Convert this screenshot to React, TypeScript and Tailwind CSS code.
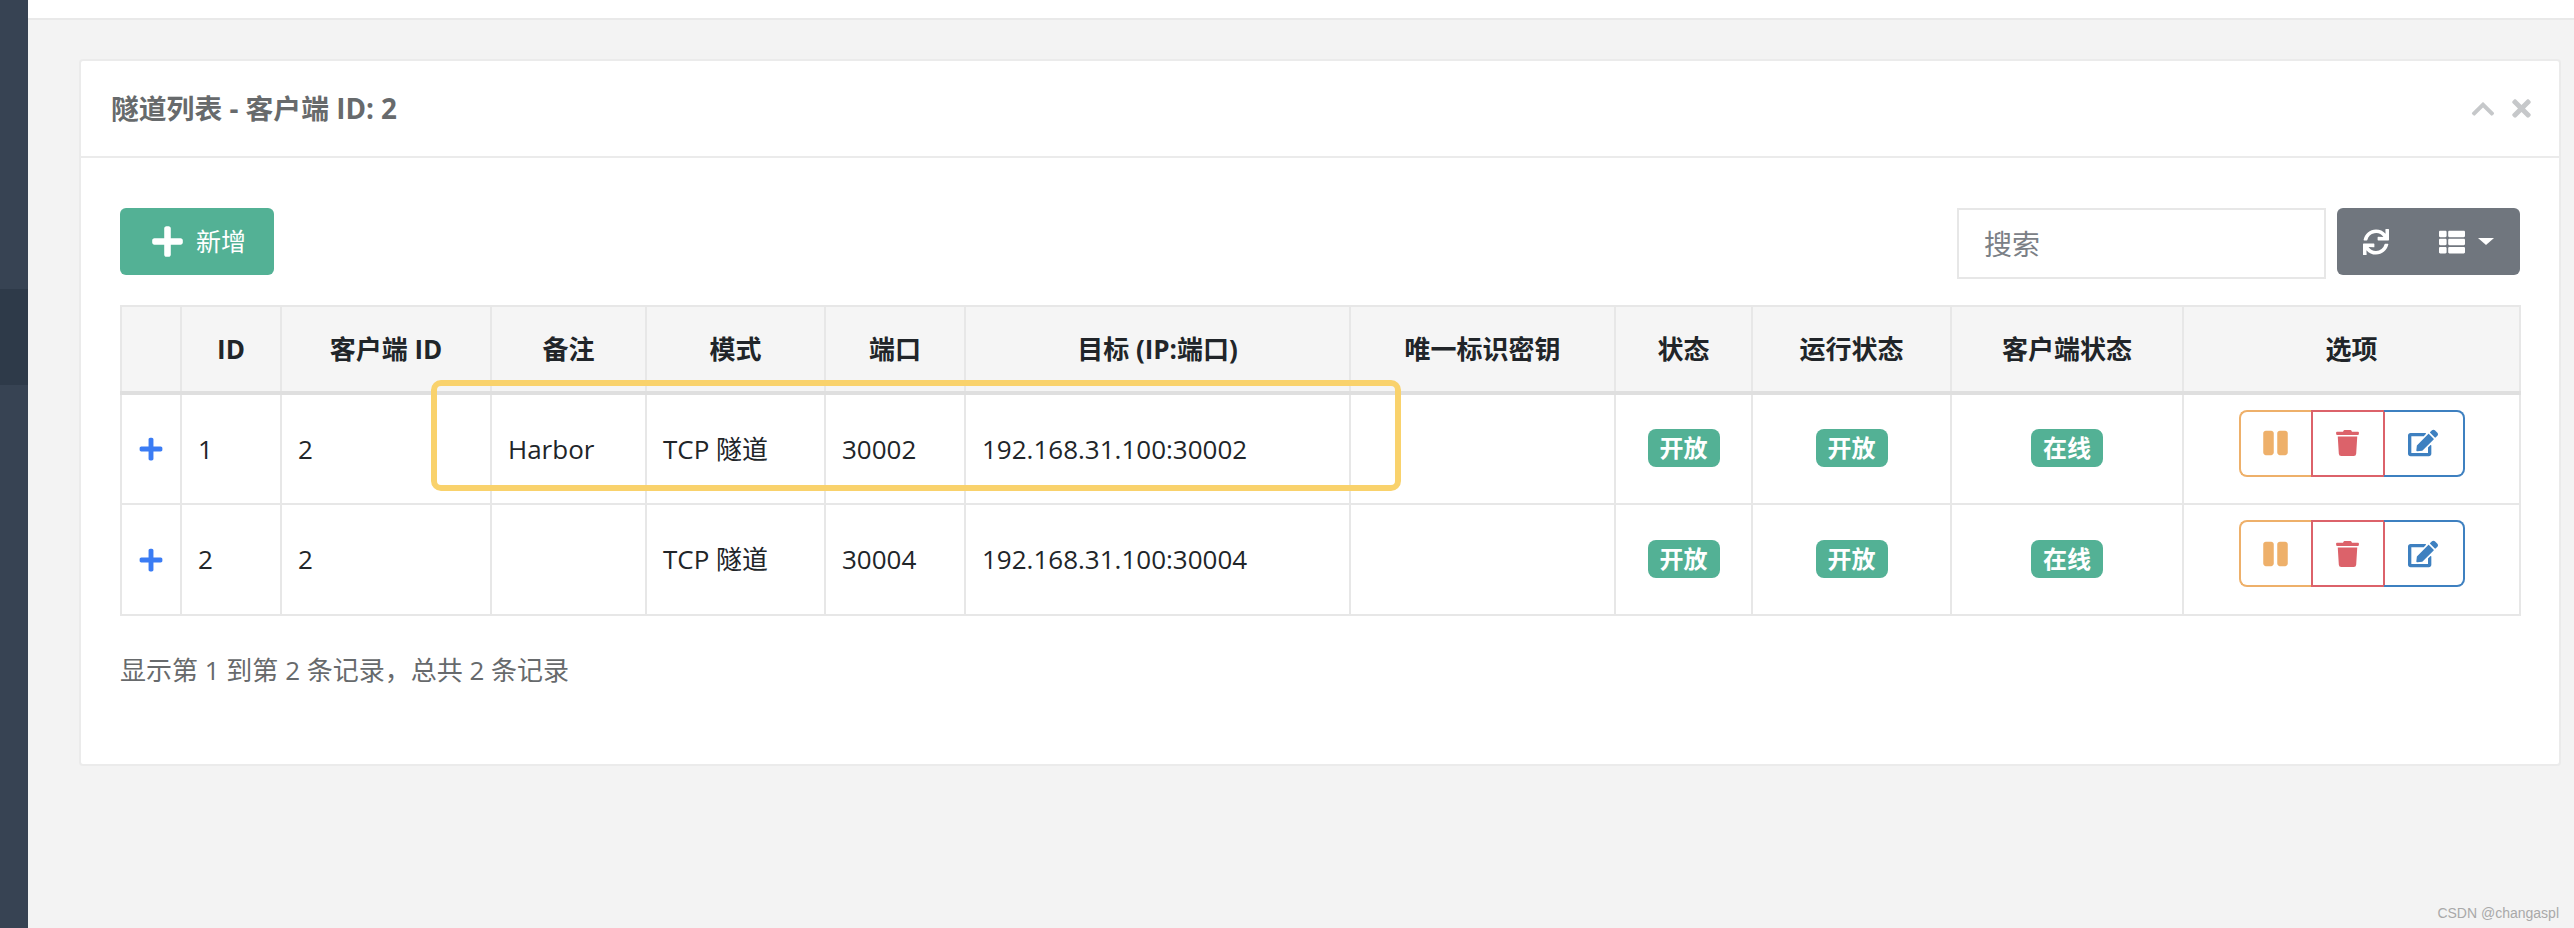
import { FaChevronUp, FaEdit, FaPause, FaPlus, FaSync, FaThList, FaTimes, FaTrash } from "react-icons/fa";

interface Tunnel {
  id: number;
  clientId: number;
  remark: string;
  port: number;
  target: string;
}

const tunnels: Tunnel[] = [
  { id: 1, clientId: 2, remark: "Harbor", port: 30002, target: "192.168.31.100:30002" },
  { id: 2, clientId: 2, remark: "", port: 30004, target: "192.168.31.100:30004" },
];

const columns = ["", "ID", "客户端 ID", "备注", "模式", "端口", "目标 (IP:端口)", "唯一标识密钥", "状态", "运行状态", "客户端状态", "选项"];

function Badge({ text }: { text: string }) {
  return (
    <span className="mb-[3px] inline-flex h-[38px] w-[72px] items-center justify-center rounded-lg bg-[#53b195] align-middle text-[24px] leading-none font-bold text-white">
      {text}
    </span>
  );
}

export default function App() {
  const cell = "border-2 border-[#e7e7e7] px-[16px] text-[26px] font-normal text-[#212529]";

  return (
    <div className="flex h-[928px] w-[2574px] overflow-hidden bg-[#f3f3f3] font-['Open_Sans','Noto_Sans_CJK_SC',sans-serif] text-[#676a6c]">
      {/* Sidebar */}
      <div className="w-[28px] shrink-0 bg-[#374353] pt-[289px]">
        <div className="h-[96px] bg-[#2e3a49]" />
      </div>

      <div className="relative min-w-0 flex-1">
        {/* Top bar */}
        <div className="h-[20px] border-b-2 border-[#e9e9e9] bg-white" />

        <div className="pt-[39px] pr-[13px] pl-[51px]">
          <div className="h-[707px] rounded border-2 border-[#ebebeb] bg-white">
            {/* Card header */}
            <div className="flex h-[97px] items-center justify-between border-b-2 border-[#ebebeb] pr-[28px] pl-[30px]">
              <h2 className="text-[27.8px] leading-none font-bold text-[#676a6c]">隧道列表 - 客户端 ID: 2</h2>
              <div className="flex items-center gap-[16px] text-[#c6c8ca]">
                <FaChevronUp className="h-[26px] w-[26px]" />
                <FaTimes className="h-[27px] w-[19px]" />
              </div>
            </div>

            {/* Card body */}
            <div className="px-[39px] pt-[50px]">
              <div className="flex items-start justify-between">
                <button className="flex h-[67px] w-[154px] items-center gap-[11px] rounded-md bg-[#53b195] pl-[30px] text-[25px] text-white">
                  <FaPlus className="h-[35px] w-[35px]" />
                  新增
                </button>
                <div className="flex items-start gap-[11px]">
                  <input
                    placeholder="搜索"
                    className="h-[71px] w-[369px] border-2 border-[#e7e7e7] bg-white px-[25px] text-[28px] outline-none placeholder:text-[#7b8086]"
                  />
                  <div className="flex h-[67px] w-[183px] items-center rounded-md bg-[#70767e] pl-[26px] text-white">
                    <FaSync className="h-[26px] w-[26px]" />
                    <FaThList className="ml-[50px] h-[26px] w-[26px]" />
                    <span className="ml-[13px] h-0 w-0 border-x-[8px] border-t-[7px] border-x-transparent border-t-white" />
                  </div>
                </div>
              </div>

              <div className="relative mt-[26px]">
                <table className="w-[2399px] table-fixed border-collapse">
                  <colgroup>
                    <col className="w-[60px]" />
                    <col className="w-[100px]" />
                    <col className="w-[210px]" />
                    <col className="w-[155px]" />
                    <col className="w-[179px]" />
                    <col className="w-[140px]" />
                    <col className="w-[385px]" />
                    <col className="w-[265px]" />
                    <col className="w-[137px]" />
                    <col className="w-[199px]" />
                    <col className="w-[232px]" />
                    <col className="w-[337px]" />
                  </colgroup>
                  <thead>
                    <tr className="h-[87px] bg-[#f5f5f5]">
                      {columns.map((name, i) => (
                        <th key={i} className="border-2 border-b-4 border-[#e7e7e7] border-b-[#dfdfdf] px-[4px] text-center text-[26px] font-bold text-[#212529]">
                          {name}
                        </th>
                      ))}
                    </tr>
                  </thead>
                  <tbody>
                    {tunnels.map((t) => (
                      <tr key={t.id} className="h-[111px]">
                        <td className={`${cell} text-center`}>
                          <FaPlus className="mx-auto h-[26px] w-[26px] text-[#3b7cf4]" />
                        </td>
                        <td className={cell}>{t.id}</td>
                        <td className={cell}>{t.clientId}</td>
                        <td className={cell}>{t.remark}</td>
                        <td className={cell}>TCP 隧道</td>
                        <td className={cell}>{t.port}</td>
                        <td className={cell}>{t.target}</td>
                        <td className={cell} />
                        <td className={`${cell} text-center`}>
                          <Badge text="开放" />
                        </td>
                        <td className={`${cell} text-center`}>
                          <Badge text="开放" />
                        </td>
                        <td className={`${cell} text-center`}>
                          <Badge text="在线" />
                        </td>
                        <td className={`${cell} text-center`}>
                          <div className="mb-[12px] inline-flex h-[67px] align-middle">
                            <button className="flex w-[72px] items-center justify-center rounded-l-lg border-2 border-r-0 border-[#eeb06a] text-[#eeb06a]">
                              <FaPause className="h-[28px] w-[25px]" />
                            </button>
                            <button className="flex w-[74px] items-center justify-center border-2 border-[#dc626a] text-[#dc626a]">
                              <FaTrash className="h-[26px] w-[23px]" />
                            </button>
                            <button className="-ml-[1px] flex w-[81px] items-center justify-center rounded-r-lg border-2 border-l-0 border-[#3e80c0] text-[#3e80c0]">
                              <FaEdit className="h-[28px] w-[30px]" />
                            </button>
                          </div>
                        </td>
                      </tr>
                    ))}
                  </tbody>
                </table>

                {/* Yellow highlight drawn over the first row */}
                <div className="pointer-events-none absolute top-[75px] left-[311px] h-[111px] w-[970px] rounded-[10px] border-[6px] border-[#f9d26c]" />
              </div>

              <p className="mt-[36px] text-[26px] leading-[36px] text-[#676a6c]">显示第 1 到第 2 条记录，总共 2 条记录</p>
            </div>
          </div>
        </div>

        {/* Watermark */}
        <span className="absolute right-[15px] bottom-[8px] font-['Liberation_Sans',sans-serif] text-[14px] leading-none text-[#a9a9a9]">
          CSDN @changaspl
        </span>
      </div>
    </div>
  );
}
